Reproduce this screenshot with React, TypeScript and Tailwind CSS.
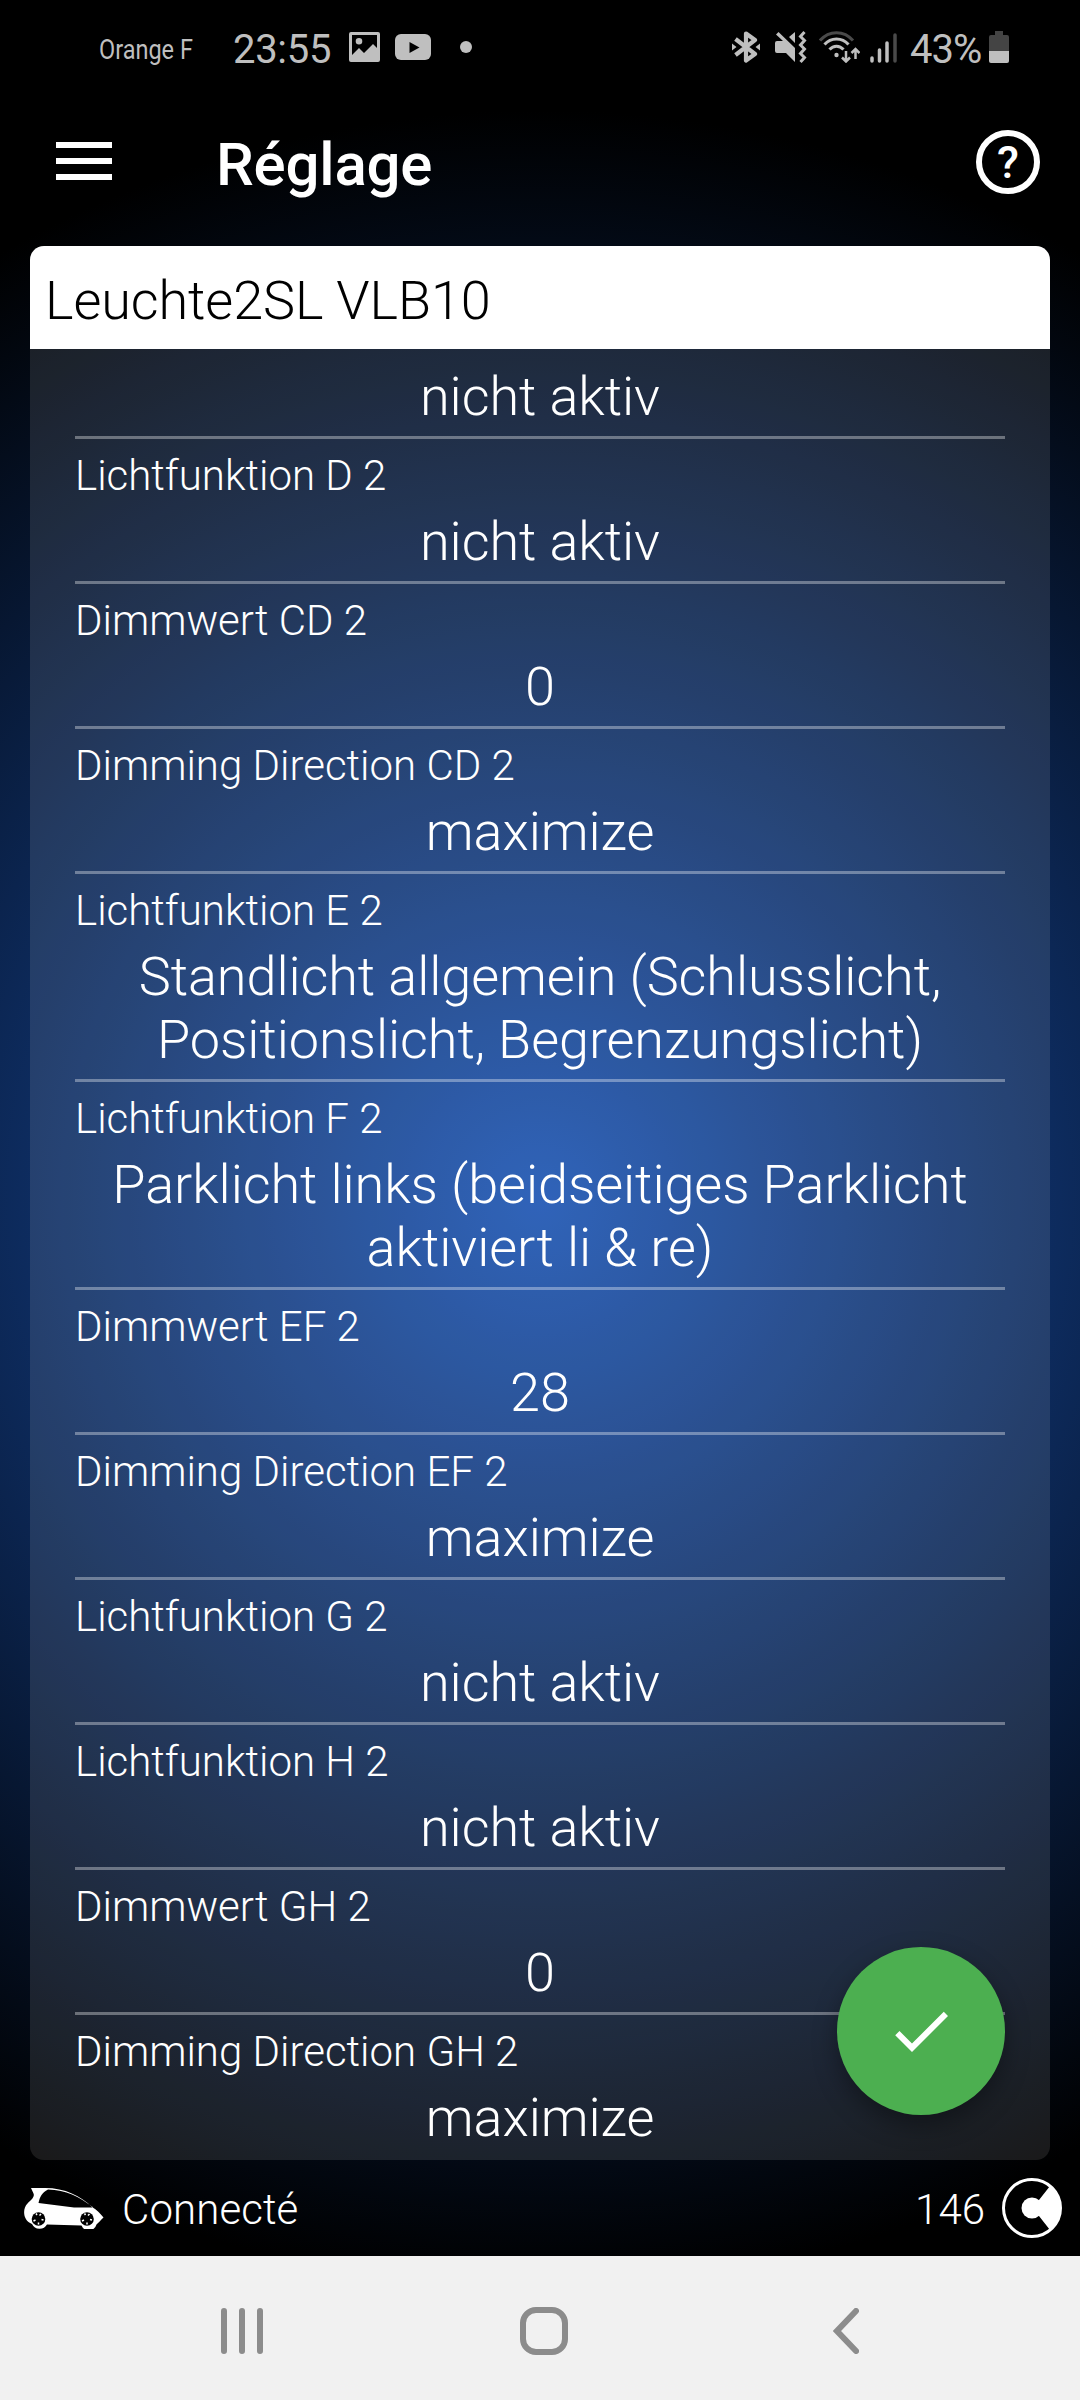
import { ReactNode } from 'react';

type Setting = { label?: string; value: ReactNode };

const settings: Setting[] = [
  { value: 'nicht aktiv' },
  { label: 'Lichtfunktion D 2', value: 'nicht aktiv' },
  { label: 'Dimmwert CD 2', value: '0' },
  { label: 'Dimming Direction CD 2', value: 'maximize' },
  {
    label: 'Lichtfunktion E 2',
    value: 'Standlicht allgemein (Schlusslicht, Positionslicht, Begrenzungslicht)',
  },
  {
    label: 'Lichtfunktion F 2',
    value: 'Parklicht links (beidseitiges Parklicht aktiviert li & re)',
  },
  { label: 'Dimmwert EF 2', value: '28' },
  { label: 'Dimming Direction EF 2', value: 'maximize' },
  { label: 'Lichtfunktion G 2', value: 'nicht aktiv' },
  { label: 'Lichtfunktion H 2', value: 'nicht aktiv' },
  { label: 'Dimmwert GH 2', value: '0' },
  { label: 'Dimming Direction GH 2', value: 'maximize' },
];

function StatusBar() {
  return (
    <div className="flex h-[94px] items-center text-[#bfbfbf]">
      <div className="ml-[99px] w-[94px] pt-[6px]">
        <span className="inline-block origin-left scale-x-[0.87] whitespace-nowrap text-[27px] leading-[32px]">Orange F</span>
      </div>
      <span className="ml-[40px] w-[99px] pt-[6px] text-[40px] leading-[48px] tracking-[-0.3px] whitespace-nowrap">23:55</span>
      <svg className="ml-[17px]" width="31" height="30" viewBox="0 0 31 30">
        <path
          fill="currentColor"
          fillRule="evenodd"
          d="M2 0h27a2 2 0 0 1 2 2v26a2 2 0 0 1-2 2H2a2 2 0 0 1-2-2V2a2 2 0 0 1 2-2zM3 3v20l7-7 5 5 9-9 4 4V3zM10 6a3.3 3.3 0 1 1 0 6.600a3.300 3.300 0 1 1 0-6.600z"
        />
      </svg>
      <svg className="ml-[15px]" width="36" height="26" viewBox="0 0 36 26">
        <rect width="36" height="26" rx="6" fill="currentColor" />
        <path d="M14.500 8v11l10-5.500z" fill="#000" />
      </svg>
      <span className="ml-[29px] size-[12px] rounded-full bg-current" />

      <svg className="ml-[260px]" width="28" height="32" viewBox="0 0 28 32">
        <path d="M3.500 8L23 23l-9 6.500v-27L23 9 3.500 24" fill="none" stroke="currentColor" strokeWidth="4.200" strokeLinejoin="round" />
        <path d="M0 12.500l4.500 3.500L0 19.500zM28 12.500L23.500 16l4.500 3.500z" fill="currentColor" />
      </svg>
      <svg className="ml-[15px]" width="32" height="32" viewBox="0 0 32 32">
        <path d="M2 10h6L1 3.500 3.500 1 20 17v14l-9-9H2a2 2 0 0 1-2-2v-8a2 2 0 0 1 2-2zM14 6l6-5v11z" fill="currentColor" />
        <path d="M29.500 1l-4 4.500 4 4-4 4.500 4 4-4 4.500 4 4-4 4.500" fill="none" stroke="currentColor" strokeWidth="3" />
      </svg>
      <svg className="ml-[12px]" width="41" height="32" viewBox="0 0 41 32" fill="none" stroke="currentColor" strokeWidth="3">
        <path d="M1 9.500C10-1 25-1 34 9.500" stroke="#4a4a4a" />
        <path d="M5.500 13.500c6.500-7.500 17.500-7.500 24 0M10.500 18.500c4-4.500 10-4.500 14 0" />
        <circle cx="17.500" cy="24" r="2.200" fill="currentColor" stroke="none" />
        <path d="M27 20v10M23 26.500l4 4 4-4M36.500 28V18M32.500 22l4-4 4 4" strokeWidth="2.500" />
      </svg>
      <svg className="ml-[10px]" width="28" height="31" viewBox="0 0 28 31" strokeWidth="3.500" strokeLinecap="round" stroke="currentColor">
        <path d="M2 26v3M9.500 18v11M17 11v18" />
        <path d="M25 3v26" stroke="#4a4a4a" />
      </svg>
      <span className="ml-[12px] w-[75px] pt-[6px] text-[40px] leading-[48px] tracking-[-1px] whitespace-nowrap">43%</span>
      <svg className="ml-[4px]" width="20" height="32" viewBox="0 0 20 32">
        <path d="M6 0h8v4h4a2 2 0 0 1 2 2v14H0V6a2 2 0 0 1 2-2h4z" fill="#444" />
        <path d="M0 20h20v10a2 2 0 0 1-2 2H2a2 2 0 0 1-2-2z" fill="currentColor" />
      </svg>
    </div>
  );
}

function Header() {
  return (
    <header className="flex h-[152px] items-start">
      <div className="mt-[48px] ml-[56px] flex w-[56px] flex-col gap-[10px]">
        <span className="h-[6px] bg-white" />
        <span className="h-[6px] bg-white" />
        <span className="h-[6px] bg-white" />
      </div>
      <h1 className="mt-[36px] ml-[104px] text-[60px] leading-[70px] font-medium tracking-[-0.2px]">Réglage</h1>
      <div className="mt-[36px] mr-[40px] ml-auto flex size-[64px] items-center justify-center rounded-full border-[6px] border-white text-[45px] leading-none font-medium">
        ?
      </div>
    </header>
  );
}

function SettingRow({ label, value }: Setting) {
  return (
    <div className="border-b-[3px] border-white/35 pb-[8px] last:border-0">
      {label && <div className="pt-[12px] text-[42px] leading-[49px]">{label}</div>}
      <div
        className={
          label
            ? 'pt-[10px] text-center text-[54px] leading-[63px] tracking-[-0.07px]'
            : 'pt-[16px] text-center text-[54px] leading-[63px] tracking-[-0.07px]'
        }
      >
        {value}
      </div>
    </div>
  );
}

function CarIcon() {
  return (
    <svg className="ml-[24px]" width="80" height="41" viewBox="0 0 80 41">
      <path
        fill="#fff"
        fillRule="evenodd"
        d="M7 0h14c20 0 36 8 47 19 5 3 8 6 11.500 10.500-3 3-5 5-7 7a8 8 0 0 1-15 1L23 36.500A8.500 8.500 0 0 1 8 36C-1 33-2 21 3.500 15.500 7 12 11 9 9.500 5.500zM24 1.500c-6 3-8 7-9.500 13.500L50 19.500l19-.3C55 8.500 42 2 24 1.500z"
      />
      {[14.5, 63].map((cx) => (
        <g key={cx}>
          <circle cx={cx} cy="31" r="6.800" fill="#000" />
          <path
            d={`M${cx} 31m-2.500-5.500l1 1.500m4-1l-1.500 1.500m4 4.500l-2-.5m-3 5l0-2m-5-1.500l2-1`}
            stroke="#fff"
            strokeWidth="1.500"
          />
        </g>
      ))}
    </svg>
  );
}

function ConnectionBar() {
  return (
    <div className="flex h-[96px] items-center font-light">
      <CarIcon />
      <span className="ml-[18px] pt-[2px] text-[42px] leading-[49px] tracking-[0.1px]">Connecté</span>
      <span className="ml-auto pt-[2px] text-[42px] leading-[49px]">146</span>
      <svg className="mr-[18px] ml-[17px]" width="60" height="60" viewBox="0 0 60 60">
        <circle cx="30" cy="30" r="28.500" fill="none" stroke="#fff" strokeWidth="3" />
        <circle cx="30" cy="30" r="10.500" fill="#fff" />
        <path d="M30 30l7-8 11-14a29 29 0 0 1 0 44L37 38z" fill="#fff" />
      </svg>
    </div>
  );
}

function NavigationBar() {
  return (
    <nav className="h-[144px] bg-[#f1f1f1]">
      <div className="flex h-[150px] items-center text-[#8c8c8c]">
        <svg className="ml-[221px]" width="42" height="46" viewBox="0 0 42 46" stroke="currentColor" strokeWidth="6" strokeLinecap="round">
          <path d="M3 3v40M21 3v40M39 3v40" />
        </svg>
        <span className="ml-[257px] h-[48px] w-[48px] rounded-[16px] border-[6px] border-current" />
        <svg className="ml-[265px]" width="26" height="46" viewBox="0 0 26 46" fill="none" stroke="currentColor" strokeWidth="6" strokeLinecap="round">
          <path d="M23 3L4 23l19 20" />
        </svg>
      </div>
    </nav>
  );
}

export default function App() {
  return (
    <div className="h-[2400px] w-[1080px] overflow-hidden bg-black bg-[radial-gradient(circle_1090px_at_540px_1200px,#1952b2_0%,#000_100%)] font-[Roboto,sans-serif] text-white">
      <StatusBar />
      <Header />

      <main className="relative mx-[30px] flex h-[1914px] flex-col overflow-hidden rounded-[14px] bg-white/10">
        <div className="h-[103px] shrink-0 bg-white pt-[23px] pl-[15px] text-[54px] leading-[63px] font-light tracking-[-0.1px] text-black">
          Leuchte2SL VLB10
        </div>
        <div className="px-[45px] font-light">
          {settings.map((s, i) => (
            <SettingRow key={i} label={s.label} value={s.value} />
          ))}
        </div>

        {/* Confirm button */}
        <button
          type="button"
          className="absolute right-[45px] bottom-[45px] flex size-[168px] items-center justify-center rounded-full bg-[#4caf50] shadow-[0_10px_24px_rgba(0,0,0,0.35)]"
        >
          <svg width="72" height="72" viewBox="0 0 24 24" fill="#fff">
            <path d="M9 16.170L4.830 12l-1.420 1.410L9 19 21 7l-1.410-1.410z" />
          </svg>
        </button>
      </main>

      <ConnectionBar />
      <NavigationBar />
    </div>
  );
}
